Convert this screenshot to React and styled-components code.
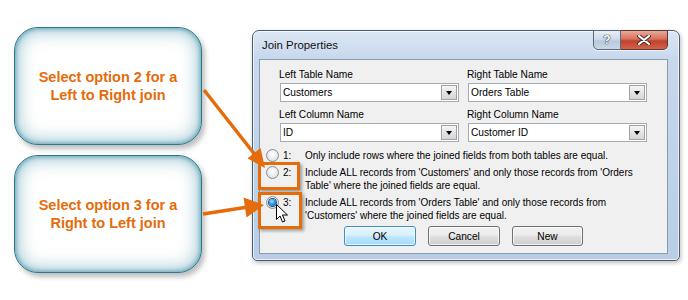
import React from 'react'
import styled, { createGlobalStyle } from 'styled-components'

const ORANGE = '#e46c0a'

const GlobalStyle = createGlobalStyle`
  html, body {
    margin: 0;
    padding: 0;
    background: #fff;
  }
  * {
    box-sizing: border-box;
  }
`

const Page = styled.div`
  position: relative;
  width: 688px;
  height: 300px;
  display: flex;
  align-items: flex-start;
  padding: 27px 0 0 14px;
  background: #fff;
  font-family: 'Liberation Sans', Arial, sans-serif;
  overflow: hidden;
`

const Callouts = styled.div`
  display: flex;
  flex-direction: column;
  gap: 10px;
  width: 188px;
`

const Callout = styled.div`
  height: 118px;
  border-radius: 24px;
  border: 1.5px solid #2a7890;
  background: #fff;
  box-shadow: inset 0 0 4px 1px rgba(60, 138, 162, 0.7),
    inset 0 0 16px 5px rgba(96, 164, 184, 0.5),
    3px 4px 5px rgba(0, 0, 0, 0.25);
  display: flex;
  align-items: center;
  justify-content: center;
  text-align: center;
  color: ${ORANGE};
  font-weight: bold;
  font-size: 14.5px;
  line-height: 18px;
`

const Dialog = styled.section`
  margin: 3px 0 0 50px;
  width: 428px;
  height: 231px;
  display: flex;
  flex-direction: column;
  padding: 0 11px 6px 6px;
  border: 1px solid #4e5d6d;
  border-radius: 7px 7px 5px 5px;
  background: linear-gradient(180deg, #dce7f4 0%, #c8d8ec 12%, #bfd2ea 60%, #b9cde7 100%);
  box-shadow: inset 0 0 0 1px rgba(255, 255, 255, 0.65), 1px 2px 4px rgba(0, 0, 0, 0.25);
`

const TitleBar = styled.div`
  height: 28px;
  display: flex;
  justify-content: space-between;
  align-items: flex-start;
`

const Title = styled.span`
  padding-left: 3px;
  line-height: 28px;
  font-size: 11.4px;
  color: #111;
`

const WindowButtons = styled.div`
  display: flex;
  margin-top: -1px;
  height: 20px;
  box-shadow: 0 1px 0 rgba(255, 255, 255, 0.7);
  border-radius: 0 0 5px 5px;
`

const WinButton = styled.div`
  width: ${p => (p.$close ? 47 : 28)}px;
  height: 20px;
  display: flex;
  align-items: center;
  justify-content: center;
  border: 1px solid ${p => (p.$close ? '#5b3731' : '#5a6a7c')};
  border-left-width: ${p => (p.$close ? 0 : 1)}px;
  border-radius: ${p => (p.$close ? '0 0 5px 0' : '0 0 0 5px')};
  background: ${p =>
    p.$close
      ? 'linear-gradient(180deg, #e9a99a 0%, #d7705c 45%, #c2402a 55%, #d2624a 100%)'
      : 'linear-gradient(180deg, #e8eef6 0%, #cfdbe9 45%, #b8c9dc 55%, #c9d7e6 100%)'};
  color: #fff;
  font-weight: bold;
  font-size: 12px;
  text-shadow: 0 0 1px #2f3b4a, 0 0 1px #2f3b4a, 0 0 1px #2f3b4a;
`

const Client = styled.div`
  height: 195px;
  background: #f0f0f0;
  border: 1px solid #8a9bb0;
  padding: 8px 6px 7px 6px;
  display: flex;
  flex-direction: column;
  font-size: 10.2px;
  color: #000;
`

const FieldGrid = styled.div`
  display: grid;
  grid-template-columns: 179px 179px;
  column-gap: 9px;
  row-gap: 6px;
  margin-left: 14px;
`

const Field = styled.div`
  display: flex;
  flex-direction: column;
  gap: 2px;
`

const FieldLabel = styled.span`
  line-height: 13px;
  margin-left: -1px;
`

const Combo = styled.div`
  height: 19px;
  border: 1px solid #a5acb5;
  background: #fff;
  display: flex;
  align-items: center;
  justify-content: space-between;
  padding: 0 1px 0 2px;
`

const DropButton = styled.div`
  width: 16px;
  height: 15px;
  border: 1px solid #a3a3a3;
  background: linear-gradient(180deg, #f6f6f6 0%, #e4e4e4 50%, #d6d6d6 100%);
  display: flex;
  align-items: center;
  justify-content: center;
  &::after {
    content: '';
    border-left: 3.5px solid transparent;
    border-right: 3.5px solid transparent;
    border-top: 4px solid #000;
    margin-top: 1px;
  }
`

const Options = styled.div`
  display: flex;
  flex-direction: column;
  gap: 4px;
  margin-top: 7px;
`

const Option = styled.div`
  display: flex;
  align-items: flex-start;
  line-height: 13px;
  font-size: 10px;
`

const Radio = styled.span`
  width: 13px;
  height: 13px;
  margin-right: 4px;
  flex-shrink: 0;
  border-radius: 50%;
  border: 1px solid #8d8f91;
  background: radial-gradient(circle at 50% 40%, #ffffff 0%, #eceeef 45%, #cfd2d4 100%);
  display: flex;
  align-items: center;
  justify-content: center;
  &::after {
    content: '';
    display: ${p => (p.$checked ? 'block' : 'none')};
    width: 7px;
    height: 7px;
    border-radius: 50%;
    background: radial-gradient(circle at 40% 35%, #a9e4ff 0%, #2a97e4 45%, #0c5aa6 100%);
    box-shadow: 0 0 0 1px #1c4f7e;
  }
`

const OptionNum = styled.span`
  width: 22px;
  flex-shrink: 0;
`

const ButtonRow = styled.div`
  display: flex;
  justify-content: center;
  gap: 12px;
  margin-top: 4px;
`

const DialogButton = styled.div`
  width: ${p => p.$w || 72}px;
  height: 20px;
  border-radius: 3px;
  border: 1px solid ${p => (p.$default ? '#3c8fc6' : '#707070')};
  background: ${p =>
    p.$default
      ? 'linear-gradient(180deg, #eaf6fd 0%, #d9f0fc 45%, #bee6fd 55%, #a7d9f5 100%)'
      : 'linear-gradient(180deg, #f2f2f2 0%, #ebebeb 45%, #dddddd 55%, #cfcfcf 100%)'};
  box-shadow: inset 0 0 0 1px rgba(255, 255, 255, 0.7);
  display: flex;
  align-items: center;
  justify-content: center;
  font-size: 10.2px;
`

const Annotations = styled.svg`
  position: absolute;
  left: 0;
  top: 0;
  width: 688px;
  height: 300px;
  pointer-events: none;
`

const Highlight = styled.div`
  position: absolute;
  left: ${p => p.$x}px;
  top: ${p => p.$y}px;
  width: ${p => p.$w}px;
  height: ${p => p.$h}px;
  border: 3px solid ${ORANGE};
  box-shadow: 2px 2px 3px rgba(0, 0, 0, 0.35);
  pointer-events: none;
`

const Cursor = styled.svg`
  position: absolute;
  left: 276px;
  top: 204px;
  width: 12px;
  height: 19px;
`

const options = [
  { n: '1:', lines: ['Only include rows where the joined fields from both tables are equal.'] },
  {
    n: '2:',
    lines: [
      "Include ALL records from 'Customers' and only those records from 'Orders",
      "Table' where the joined fields are equal.",
    ],
  },
  {
    n: '3:',
    checked: true,
    lines: [
      "Include ALL records from 'Orders Table' and only those records from",
      "'Customers' where the joined fields are equal.",
    ],
  },
]

export default function App() {
  return (
    <>
      <GlobalStyle />
      <Page>
        <Callouts>
          <Callout>
            Select option 2 for a
            <br />
            Left to Right join
          </Callout>
          <Callout>
            Select option 3 for a
            <br />
            Right to Left join
          </Callout>
        </Callouts>

        <Dialog>
          <TitleBar>
            <Title>Join Properties</Title>
            <WindowButtons>
              <WinButton>?</WinButton>
              <WinButton $close>
                <svg width="14" height="10" viewBox="0 0 14 10">
                  <path d="M2 1 L12 9 M12 1 L2 9" stroke="#3a2a28" strokeWidth="4" strokeLinecap="round" />
                  <path d="M2 1 L12 9 M12 1 L2 9" stroke="#fff" strokeWidth="2.2" strokeLinecap="round" />
                </svg>
              </WinButton>
            </WindowButtons>
          </TitleBar>

          <Client>
            <FieldGrid>
              <Field>
                <FieldLabel>Left Table Name</FieldLabel>
                <Combo>
                  <span>Customers</span>
                  <DropButton />
                </Combo>
              </Field>
              <Field>
                <FieldLabel>Right Table Name</FieldLabel>
                <Combo>
                  <span>Orders Table</span>
                  <DropButton />
                </Combo>
              </Field>
              <Field>
                <FieldLabel>Left Column Name</FieldLabel>
                <Combo>
                  <span>ID</span>
                  <DropButton />
                </Combo>
              </Field>
              <Field>
                <FieldLabel>Right Column Name</FieldLabel>
                <Combo>
                  <span>Customer ID</span>
                  <DropButton />
                </Combo>
              </Field>
            </FieldGrid>

            <Options>
              {options.map(o => (
                <Option key={o.n}>
                  <Radio $checked={o.checked} />
                  <OptionNum>{o.n}</OptionNum>
                  <span>
                    {o.lines.map((l, i) => (
                      <React.Fragment key={i}>
                        {i > 0 && <br />}
                        {l}
                      </React.Fragment>
                    ))}
                  </span>
                </Option>
              ))}
            </Options>

            <ButtonRow>
              <DialogButton $default>OK</DialogButton>
              <DialogButton>Cancel</DialogButton>
              <DialogButton $w={71}>New</DialogButton>
            </ButtonRow>
          </Client>
        </Dialog>

        <Highlight $x={258} $y={162} $w={42} $h={28} />
        <Highlight $x={258} $y={192} $w={44} $h={37} />

        <Annotations viewBox="0 0 688 300">
          <line x1="204" y1="90" x2="256" y2="156" stroke={ORANGE} strokeWidth="3.5" />
          <polygon points="265,168 247.5,158.5 260.5,148" fill={ORANGE} />
          <line x1="203" y1="214" x2="248" y2="207" stroke={ORANGE} strokeWidth="3.5" />
          <polygon points="264,205 246.5,217.5 243.5,197.5" fill={ORANGE} />
        </Annotations>

        <Cursor viewBox="0 0 12 19">
          <path
            d="M0.5 0.5 L0.5 15.5 L4 12 L6.5 18 L9 17 L6.5 11 L11.5 11 Z"
            fill="#fff"
            stroke="#000"
            strokeWidth="1"
            strokeLinejoin="round"
          />
        </Cursor>
      </Page>
    </>
  )
}
